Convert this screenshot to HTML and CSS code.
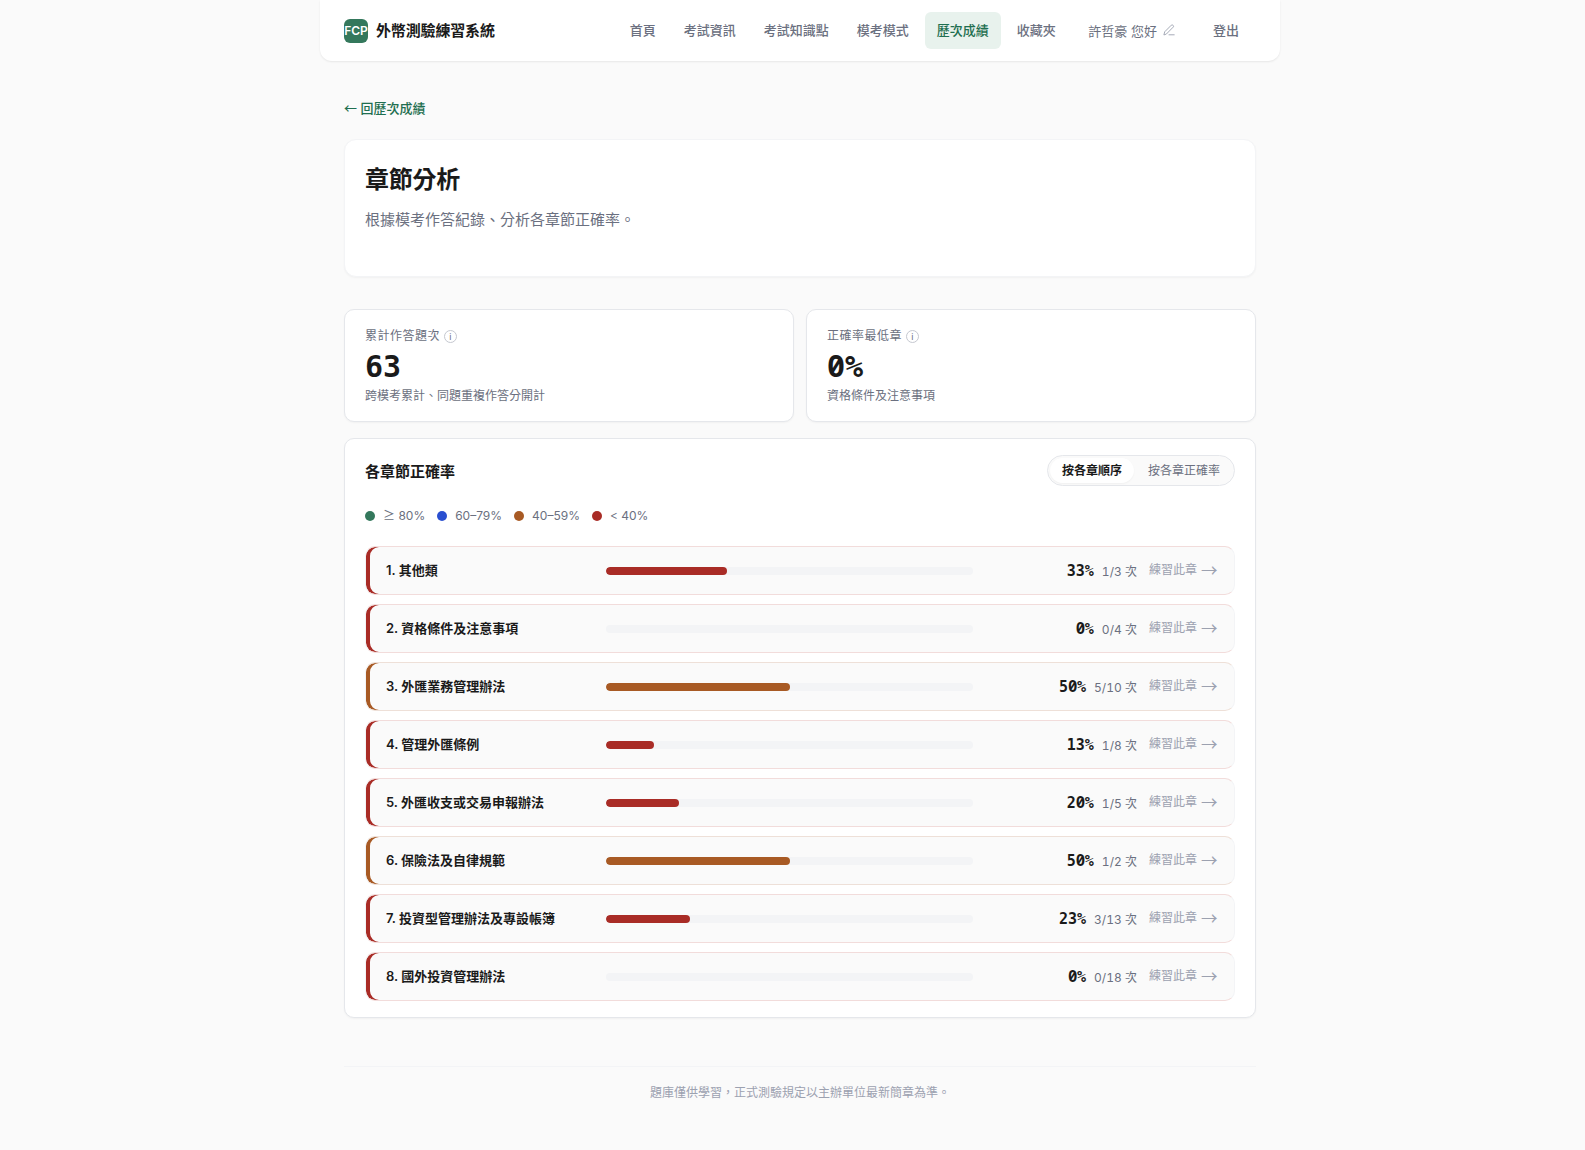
FILE: index.html
```
<!DOCTYPE html>
<html lang="zh-Hant">
<head>
    <meta charset="UTF-8">
    <meta name="viewport" content="width=device-width, initial-scale=1.0">
    <title>章節分析 - 外幣測驗練習系統</title>
    <link rel="stylesheet" href="styles.css">
</head>
<body>
    <header class="topbar">
        <a class="brand" href="#"><span class="brand-mark">FCP</span><span class="brand-name">外幣測驗練習系統</span></a>
        <nav class="nav">
            <a href="#">首頁</a>
            <a href="#">考試資訊</a>
            <a href="#">考試知識點</a>
            <a href="#">模考模式</a>
            <a href="#" class="active">歷次成績</a>
            <a href="#">收藏夾</a>
        </nav>
        <div class="user">
            <span>許哲豪 您好</span>
            <svg class="pen" viewBox="0 0 12 12" fill="none" stroke="currentColor" stroke-width="0.9" stroke-linecap="round" stroke-linejoin="round">
                <path d="M1 10.6l.7-2.8L8.3 1.2a1.1 1.1 0 0 1 1.6 0l.3.3a1.1 1.1 0 0 1 0 1.6L3.6 9.8zM6 10.8h5.2"/>
            </svg>
        </div>
        <a class="logout" href="#">登出</a>
    </header>

    <main class="page">
        <a class="back" href="#"><span class="sym">←</span> 回歷次成績</a>

        <section class="hero">
            <h1>章節分析</h1>
            <p>根據模考作答紀錄、分析各章節正確率。</p>
        </section>

        <section class="stats">
            <div class="stat">
                <div class="stat-label">累計作答題次 <span class="info">i</span></div>
                <div class="stat-value">63</div>
                <div class="stat-note">跨模考累計、同題重複作答分開計</div>
            </div>
            <div class="stat">
                <div class="stat-label">正確率最低章 <span class="info">i</span></div>
                <div class="stat-value"><span class="zero">0</span>%</div>
                <div class="stat-note">資格條件及注意事項</div>
            </div>
        </section>

        <section class="panel">
            <div class="panel-head">
                <h2>各章節正確率</h2>
                <div class="toggle">
                    <button class="on">按各章順序</button>
                    <button>按各章正確率</button>
                </div>
            </div>
            <div class="legend">
                <div><i class="dot green"></i><span><span class="sym">≥</span> 80%</span></div>
                <div><i class="dot blue"></i>60–79%</div>
                <div><i class="dot amber"></i>40–59%</div>
                <div><i class="dot red"></i>&lt; 40%</div>
            </div>
            <div class="rows">
                <div class="row low">
                    <div class="name">1. 其他類</div>
                    <div class="bar"><div class="fill" style="width:33%"></div></div>
                    <div class="score"><b>33%</b><span>1/3 次</span></div>
                    <a class="go" href="#">練習此章 <span class="arrow">→</span></a>
                </div>
                <div class="row low">
                    <div class="name">2. 資格條件及注意事項</div>
                    <div class="bar"><div class="fill" style="width:0%"></div></div>
                    <div class="score"><b><span class="zero">0</span>%</b><span>0/4 次</span></div>
                    <a class="go" href="#">練習此章 <span class="arrow">→</span></a>
                </div>
                <div class="row mid">
                    <div class="name">3. 外匯業務管理辦法</div>
                    <div class="bar"><div class="fill" style="width:50%"></div></div>
                    <div class="score"><b>5<span class="zero">0</span>%</b><span>5/10 次</span></div>
                    <a class="go" href="#">練習此章 <span class="arrow">→</span></a>
                </div>
                <div class="row low">
                    <div class="name">4. 管理外匯條例</div>
                    <div class="bar"><div class="fill" style="width:13%"></div></div>
                    <div class="score"><b>13%</b><span>1/8 次</span></div>
                    <a class="go" href="#">練習此章 <span class="arrow">→</span></a>
                </div>
                <div class="row low">
                    <div class="name">5. 外匯收支或交易申報辦法</div>
                    <div class="bar"><div class="fill" style="width:20%"></div></div>
                    <div class="score"><b>2<span class="zero">0</span>%</b><span>1/5 次</span></div>
                    <a class="go" href="#">練習此章 <span class="arrow">→</span></a>
                </div>
                <div class="row mid">
                    <div class="name">6. 保險法及自律規範</div>
                    <div class="bar"><div class="fill" style="width:50%"></div></div>
                    <div class="score"><b>5<span class="zero">0</span>%</b><span>1/2 次</span></div>
                    <a class="go" href="#">練習此章 <span class="arrow">→</span></a>
                </div>
                <div class="row low">
                    <div class="name">7. 投資型管理辦法及專設帳簿</div>
                    <div class="bar"><div class="fill" style="width:23%"></div></div>
                    <div class="score"><b>23%</b><span>3/13 次</span></div>
                    <a class="go" href="#">練習此章 <span class="arrow">→</span></a>
                </div>
                <div class="row low">
                    <div class="name">8. 國外投資管理辦法</div>
                    <div class="bar"><div class="fill" style="width:0%"></div></div>
                    <div class="score"><b><span class="zero">0</span>%</b><span>0/18 次</span></div>
                    <a class="go" href="#">練習此章 <span class="arrow">→</span></a>
                </div>
            </div>
        </section>

        <footer class="footer">題庫僅供學習，正式測驗規定以主辦單位最新簡章為準。</footer>
    </main>
</body>
</html>
```
FILE: styles.css
```
:root {
    --green: #34785c;
    --blue: #2a4fd0;
    --amber: #a85a24;
    --red: #a92c26;
    --text: #1a1a1a;
    --muted: #6b7080;
    --faint: #9ca1b0;
    --line: #e5e7eb;
    --bg: #fafafa;
}
* { margin: 0; padding: 0; box-sizing: border-box; }
body {
    background: var(--bg);
    color: var(--text);
    font-family: Inter, "Noto Sans CJK TC", sans-serif;
    font-size: 13px;
    line-height: 1.6;
    min-height: 100vh;
    padding-left: 15px;
}
a { color: inherit; text-decoration: none; }
.sym { font-family: "Noto Sans CJK TC", sans-serif; line-height: 1; }

/* top bar */
.topbar {
    display: flex;
    align-items: center;
    width: 960px;
    height: 61px;
    margin: 0 auto;
    padding: 0 24px;
    background: #fff;
    border-radius: 0 0 12px 12px;
    box-shadow: 0 1px 2px rgba(0, 0, 0, 0.08);
    color: var(--muted);
    font-weight: 500;
}
.brand {
    display: flex;
    align-items: center;
    gap: 8px;
    margin-right: auto;
    color: var(--text);
}
.brand-mark {
    width: 24px;
    height: 24px;
    border-radius: 6px;
    background: var(--green);
    color: #fff;
    font-size: 12px;
    font-weight: 600;
    line-height: 24px;
    display: flex;
    justify-content: center;
}
.brand-name {
    font-size: 15px;
    font-weight: 700;
    letter-spacing: -0.01em;
}
.nav { display: flex; gap: 4px; }
.nav a {
    padding: 8px 12px;
    border-radius: 6px;
}
.nav a.active {
    background: #e8f2ed;
    color: #1f6f50;
}
.user {
    display: flex;
    align-items: center;
    gap: 6px;
    margin-left: 20.5px;
    padding-top: 2px;
    font-weight: 400;
}
.pen {
    width: 12px;
    height: 12px;
    margin-bottom: 2px;
    color: var(--faint);
}
.logout { margin: 0 17px 0 38px; }

/* page */
.page {
    width: 912px;
    margin: 0 auto;
    padding-top: 37px;
}
.back {
    display: block;
    height: 21px;
    color: #1f6f50;
    font-weight: 500;
}
.hero {
    height: 138px;
    margin-top: 20px;
    padding: 21px 20px;
    background: #fff;
    border: 1px solid #f3f4f6;
    border-radius: 12px;
    box-shadow: 0 1px 2px rgba(0, 0, 0, 0.04);
}
.hero h1 {
    font-size: 24px;
    font-weight: 700;
    line-height: 38px;
    letter-spacing: -0.01em;
}
.hero p {
    margin-top: 9px;
    font-size: 15px;
    line-height: 24px;
    color: var(--muted);
}
.stats {
    display: grid;
    grid-template-columns: 1fr 1fr;
    gap: 12px;
    margin-top: 32px;
}
.stat, .panel {
    background: #fff;
    border: 1px solid var(--line);
    border-radius: 10px;
    box-shadow: 0 1px 2px rgba(0, 0, 0, 0.04);
}
.stat {
    height: 113px;
    padding: 16px 20px;
    font-size: 12px;
    color: var(--muted);
}
.stat-label {
    display: flex;
    align-items: center;
    gap: 4px;
    height: 20px;
    letter-spacing: 0.04em;
}
.info {
    width: 13px;
    height: 13px;
    border: 1px solid #c5c8d0;
    border-radius: 50%;
    font-size: 9px;
    line-height: 11px;
    letter-spacing: 0;
    text-align: center;
}
.stat-value {
    margin: 4px 0 2px;
    font-family: "DejaVu Sans Mono", monospace;
    font-size: 30px;
    font-weight: 700;
    line-height: 34px;
    color: var(--text);
}
/* slashed zero */
.zero { font-family: "Noto Sans Mono", "DejaVu Sans Mono", monospace; line-height: 1; }

/* chapters */
.panel {
    height: 580px;
    margin-top: 16px;
    padding: 16px 20px;
}
.panel-head {
    display: flex;
    align-items: center;
    justify-content: space-between;
}
.panel-head h2 {
    padding-top: 2px;
    font-size: 15px;
    font-weight: 600;
}
.toggle {
    display: flex;
    gap: 2px;
    padding: 2px;
    border: 1px solid var(--line);
    border-radius: 999px;
    background: var(--bg);
}
.toggle button {
    height: 25px;
    padding: 0 12px 2px;
    border: none;
    border-radius: 999px;
    background: none;
    color: var(--muted);
    font: 400 12px Inter, "Noto Sans CJK TC", sans-serif;
}
.toggle .on {
    background: #fff;
    color: var(--text);
    font-weight: 600;
    box-shadow: 0 1px 2px rgba(0, 0, 0, 0.04);
}
.legend {
    display: flex;
    gap: 12px;
    height: 19px;
    margin-top: 20px;
    font-size: 12px;
    color: var(--muted);
}
.legend div {
    display: flex;
    align-items: center;
    gap: 8px;
}
.dot {
    width: 10px;
    height: 10px;
    border-radius: 50%;
}
.green { background: var(--green); }
.blue { background: var(--blue); }
.amber { background: var(--amber); }
.red { background: var(--red); }

.rows {
    display: grid;
    gap: 9px;
    margin-top: 21px;
}
.row {
    display: grid;
    grid-template-columns: 208px 367px 1fr auto;
    column-gap: 12px;
    align-items: center;
    height: 49px;
    padding: 0 15px 0 20px;
    background: var(--bg);
    border: 1px solid #f3f4f6;
    border-radius: 10px;
}
.low {
    border-color: #f2dcdb #f3f4f6;
    box-shadow: inset 4px 0 0 var(--red);
}
.mid {
    border-color: #eee0d8 #f3f4f6;
    box-shadow: inset 4px 0 0 var(--amber);
}
.low .fill { background: var(--red); }
.mid .fill { background: var(--amber); }
.name { font-weight: 600; }
.bar {
    height: 8px;
    border-radius: 4px;
    background: #f3f4f6;
    overflow: hidden;
}
.fill {
    height: 100%;
    border-radius: 4px;
}
.score {
    display: flex;
    align-items: baseline;
    justify-content: flex-end;
    gap: 8px;
    font-size: 12px;
    font-variant-numeric: tabular-nums;
    color: var(--muted);
}
.score b {
    font-family: "DejaVu Sans Mono", monospace;
    font-size: 15px;
    color: var(--text);
}
.score .zero {
    margin-right: -0.4px;
    font-size: 15.7px;
}
.go {
    display: flex;
    align-items: center;
    gap: 4px;
    height: 20px;
    margin-bottom: 2px;
    font-size: 12px;
    color: var(--faint);
}
.arrow {
    width: 18px;
    padding-top: 2px;
    font-family: "Noto Sans CJK TC", sans-serif;
    font-size: 16.5px;
    font-weight: 400;
    line-height: 1;
}
.footer {
    margin-top: 48px;
    padding-top: 16px;
    border-top: 1px solid #f3f4f6;
    text-align: center;
    font-size: 12px;
    color: var(--faint);
}
```
